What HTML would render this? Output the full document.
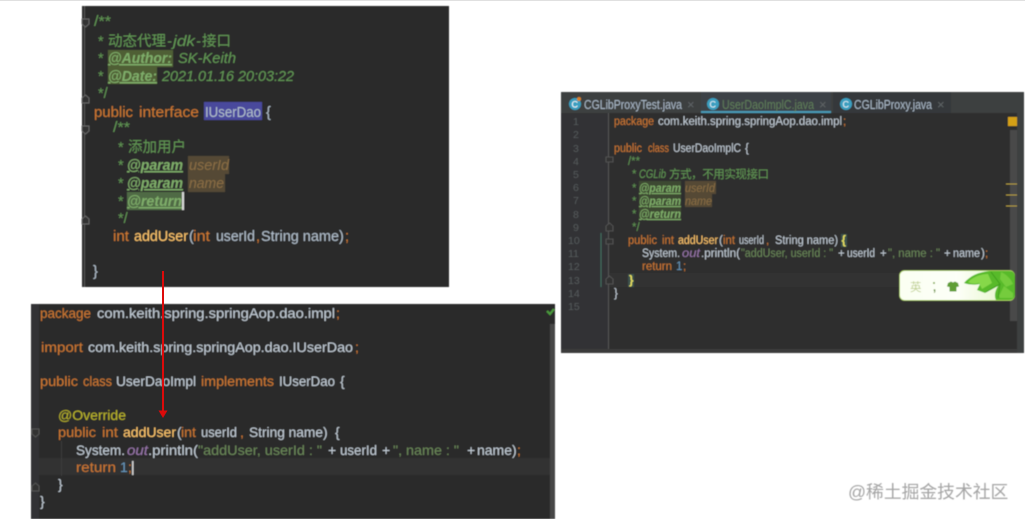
<!DOCTYPE html>
<html><head><meta charset="utf-8">
<style>
html,body{margin:0;padding:0;background:#fff;width:1025px;height:519px;overflow:hidden}
svg{display:block;position:absolute;left:0;top:0}
text{font-family:"Liberation Sans","Noto Sans CJK SC",sans-serif;white-space:pre}
.a text{font-size:14.5px}.b text{font-size:14px}.c text{font-size:11.5px}
.k{fill:#cc7832}.t{fill:#b0bdca}.w{fill:#c2ccd6}.m{fill:#ffc66d}.g{fill:#629755}.s{fill:#6a8759}.p{fill:#bbb529}
.tag{fill:#7fae6a;font-weight:bold;font-style:italic;text-decoration:underline}
.pn{fill:#8a6d45;font-style:italic}.i{font-style:italic}
.c text.ln{fill:#54585a;font-size:10.5px}
.c text.tab{font-size:12.5px}
.c text.x{font-size:13px;fill:#5f6466}
</style></head><body>
<svg width="1025" height="519" viewBox="0 0 1025 519" xmlns="http://www.w3.org/2000/svg">
<defs>
<filter id="bl" x="-5%" y="-5%" width="110%" height="110%"><feGaussianBlur stdDeviation="0.45"/></filter>
<linearGradient id="ime" x1="0" x2="1" y1="0" y2="0"><stop offset="0" stop-color="#fbfff2"/><stop offset=".5" stop-color="#fdfff8"/><stop offset="1" stop-color="#e2f4c4"/></linearGradient>
</defs>
<rect x="0" y="0" width="1025" height="1" fill="#e0e0e0"/>
<g filter="url(#bl)">
<!-- panel 1 -->
<rect x="82" y="6" width="367" height="281" fill="#2b2b2b"/>
<line x1="84.500" y1="6" x2="84.500" y2="287" stroke="#555" stroke-width="1"/>
<path d="M82 19h7v5l-3.500 3-3.500-3zM82 98l3.500-3 3.500 3v5h-7zM82 126h7v5l-3.500 3-3.500-3zM82 219l3.500-3 3.500 3v5h-7z" fill="#333" stroke="#666"/>
<rect x="108" y="50" width="65" height="17" fill="#4f5f35"/>
<rect x="108" y="67" width="49" height="17" fill="#4f5f35"/>
<rect x="204" y="102" width="58" height="18" fill="#4a4a9c"/>
<rect x="188" y="156" width="41" height="18" fill="#544a35"/>
<rect x="188" y="174" width="37" height="18" fill="#544a35"/>
<rect x="127" y="192" width="57" height="18" fill="#4f6a45"/>
<rect x="182" y="192" width="2" height="18" fill="#d8d8d8"/>
<g class="a">
<text x="94" y="26" class="g" textLength="17" lengthAdjust="spacingAndGlyphs">/**</text>
<text x="98" y="46" class="g">*</text><text x="108" y="46" class="g">动态代理</text><text x="167" y="46" class="g i">-</text><text x="173" y="46" class="g i" textLength="22" lengthAdjust="spacingAndGlyphs">jdk</text><text x="196" y="46" class="g i">-</text><text x="202" y="46" class="g">接口</text>
<text x="98" y="63" class="g">*</text><text x="108" y="63" class="tag" textLength="64" lengthAdjust="spacingAndGlyphs">@Author:</text><text x="178" y="63" class="g i" textLength="58" lengthAdjust="spacingAndGlyphs">SK-Keith</text>
<text x="98" y="81" class="g">*</text><text x="108" y="81" class="tag" textLength="49" lengthAdjust="spacingAndGlyphs">@Date:</text><text x="162" y="81" class="g i" textLength="132" lengthAdjust="spacingAndGlyphs">2021.01.16 20:03:22</text>
<text x="98" y="98" class="g">*/</text>
<text x="94" y="117" class="k" textLength="39" lengthAdjust="spacingAndGlyphs">public</text><text x="139" y="117" class="k" textLength="60" lengthAdjust="spacingAndGlyphs">interface</text><text x="205" y="117" class="t" textLength="56" lengthAdjust="spacingAndGlyphs">IUserDao</text><text x="266" y="117" class="t">{</text>
<text x="113" y="132" class="g" textLength="17" lengthAdjust="spacingAndGlyphs">/**</text>
<text x="118" y="152" class="g">*</text><text x="128" y="152" class="g">添加用户</text>
<text x="118" y="170" class="g">*</text><text x="127" y="170" class="tag" textLength="56" lengthAdjust="spacingAndGlyphs">@param</text><text x="189" y="170" class="pn" textLength="40" lengthAdjust="spacingAndGlyphs">userId</text>
<text x="118" y="188" class="g">*</text><text x="127" y="188" class="tag" textLength="56" lengthAdjust="spacingAndGlyphs">@param</text><text x="189" y="188" class="pn" textLength="35" lengthAdjust="spacingAndGlyphs">name</text>
<text x="118" y="206" class="g">*</text><text x="127" y="206" class="tag" textLength="55" lengthAdjust="spacingAndGlyphs">@return</text>
<text x="118" y="223" class="g">*/</text>
<text x="113" y="241" class="k" textLength="16" lengthAdjust="spacingAndGlyphs">int</text><text x="134" y="241" class="m" textLength="54" lengthAdjust="spacingAndGlyphs">addUser</text><text x="189" y="241" class="t">(</text><text x="193" y="241" class="k" textLength="17" lengthAdjust="spacingAndGlyphs">int</text><text x="216" y="241" class="t" textLength="39" lengthAdjust="spacingAndGlyphs">userId</text><text x="256" y="241" class="k">,</text><text x="261" y="241" class="t" textLength="78" lengthAdjust="spacingAndGlyphs">String name</text><text x="339" y="241" class="t">)</text><text x="345" y="241" class="k">;</text>
<text x="93" y="276" class="t">}</text>
</g>
<!-- panel 2 -->
<rect x="31" y="304" width="524" height="215" fill="#2b2b2b"/>
<rect x="31" y="304" width="8" height="215" fill="#303234"/>
<rect x="39" y="458" width="511" height="17" fill="#323232"/>
<rect x="550" y="324" width="5" height="195" fill="#474747"/>
<path d="M547 311l3 3 4-5" fill="none" stroke="#4c9a3c" stroke-width="2.200"/>
<path d="M32 429h7v5l-3.500 3-3.500-3zM32 486l3.500-3 3.500 3v5h-7z" fill="#333" stroke="#555"/>
<line x1="61.500" y1="441" x2="61.500" y2="476" stroke="#3c3c3c"/>
<g class="b">
<text x="40" y="318" class="k" textLength="51" lengthAdjust="spacingAndGlyphs">package</text><text x="97" y="318" class="w" textLength="238" lengthAdjust="spacingAndGlyphs">com.keith.spring.springAop.dao.impl</text><text x="336" y="318" class="k">;</text>
<text x="41" y="352" class="k" textLength="42" lengthAdjust="spacingAndGlyphs">import</text><text x="88" y="352" class="w" textLength="265" lengthAdjust="spacingAndGlyphs">com.keith.spring.springAop.dao.IUserDao</text><text x="355" y="352" class="k">;</text>
<text x="40" y="386" class="k" textLength="38" lengthAdjust="spacingAndGlyphs">public</text><text x="83" y="386" class="k" textLength="29" lengthAdjust="spacingAndGlyphs">class</text><text x="116" y="386" class="w" textLength="80" lengthAdjust="spacingAndGlyphs">UserDaoImpl</text><text x="201" y="386" class="k" textLength="73" lengthAdjust="spacingAndGlyphs">implements</text><text x="279" y="386" class="w" textLength="56" lengthAdjust="spacingAndGlyphs">IUserDao</text><text x="340" y="386" class="w">{</text>
<text x="58" y="420" class="p" textLength="68" lengthAdjust="spacingAndGlyphs">@Override</text>
<text x="58" y="437" class="k" textLength="38" lengthAdjust="spacingAndGlyphs">public</text><text x="102" y="437" class="k" textLength="16" lengthAdjust="spacingAndGlyphs">int</text><text x="123" y="437" class="m" textLength="53" lengthAdjust="spacingAndGlyphs">addUser</text><text x="177" y="437" class="w">(</text><text x="181" y="437" class="k" textLength="15" lengthAdjust="spacingAndGlyphs">int</text><text x="201" y="437" class="w" textLength="36" lengthAdjust="spacingAndGlyphs">userId</text><text x="240" y="437" class="k">,</text><text x="249" y="437" class="w" textLength="74" lengthAdjust="spacingAndGlyphs">String name</text><text x="323" y="437" class="w">)</text><text x="335" y="437" class="w">{</text>
<text x="76" y="455" class="w" textLength="49" lengthAdjust="spacingAndGlyphs">System.</text><text x="127" y="455" fill="#9876aa" class="i" textLength="21" lengthAdjust="spacingAndGlyphs">out</text><text x="148" y="455" class="w" textLength="50" lengthAdjust="spacingAndGlyphs">.println(</text><text x="198" y="455" class="s" textLength="124" lengthAdjust="spacingAndGlyphs">"addUser, userId : "</text><text x="328" y="455" class="w">+</text><text x="340" y="455" class="w" textLength="37" lengthAdjust="spacingAndGlyphs">userId</text><text x="382" y="455" class="w">+</text><text x="393" y="455" class="s" textLength="66" lengthAdjust="spacingAndGlyphs">", name : "</text><text x="467" y="455" class="w">+</text><text x="477" y="455" class="w" textLength="35" lengthAdjust="spacingAndGlyphs">name</text><text x="512" y="455" class="w">)</text><text x="517" y="455" class="k">;</text>
<text x="76" y="472" class="k" textLength="40" lengthAdjust="spacingAndGlyphs">return</text><text x="120" y="472" fill="#6897bb">1</text><text x="128" y="472" class="k">;</text>
<rect x="132" y="461" width="1.500" height="14" fill="#d0d0d0"/>
<text x="58" y="489" class="w">}</text>
<text x="40" y="506" class="w">}</text>
</g>
<!-- panel 3 -->
<rect x="561" y="92" width="463" height="261" fill="#2d2d2d"/>
<rect x="561" y="92" width="463" height="21" fill="#3c3f41"/>
<rect x="561" y="113" width="47" height="236" fill="#313335"/>
<line x1="608.500" y1="113" x2="608.500" y2="349" stroke="#555"/>
<rect x="561" y="349" width="463" height="4" fill="#3a3a3a"/>
<rect x="1017" y="92" width="7" height="261" fill="#3c3f41"/>
<rect x="610" y="273" width="400" height="14" fill="#323232"/>
<rect x="1010" y="130" width="7" height="191" fill="#4a4a4a"/>
<rect x="1008" y="117" width="9" height="9" fill="#d4a017"/>
<path d="M1006 184h11M1006 195h11M1006 206h11" stroke="#b09a40" stroke-width="1"/>
<rect x="833" y="92" width="118" height="21" fill="#35393b"/>
<rect x="701" y="92" width="130" height="19" fill="#3e4346"/>
<rect x="701" y="111" width="130" height="2" fill="#4a9ab5"/>
<line x1="601" y1="233" x2="601" y2="287" stroke="#3f6f5f" stroke-width="1"/>
<circle cx="575" cy="104" r="6" fill="#3a9fc0"/><circle cx="579" cy="99" r="2" fill="#d8802a"/><text x="571.500" y="107.500" fill="#fff" style="font-size:9px">C</text>
<circle cx="713" cy="104" r="6" fill="#3a9fc0"/><text x="709.500" y="107.500" fill="#e8f4f8" style="font-size:9px">C</text>
<circle cx="846" cy="104" r="6" fill="#3a9fc0"/><text x="842.500" y="107.500" fill="#e8f4f8" style="font-size:9px">C</text>
<g class="c">
<text x="584" y="109" fill="#a9b7c6" class="tab" textLength="98" lengthAdjust="spacingAndGlyphs">CGLibProxyTest.java</text><text x="687" y="109" class="x">×</text>
<text x="722" y="109" fill="#5f7d5a" class="tab" textLength="92" lengthAdjust="spacingAndGlyphs">UserDaoImplC.java</text><text x="819" y="109" class="x">×</text>
<text x="854" y="109" fill="#a9b7c6" class="tab" textLength="78" lengthAdjust="spacingAndGlyphs">CGLibProxy.java</text><text x="937" y="109" class="x">×</text>
<text class="ln" x="573" y="125">1</text><text class="ln" x="573" y="138">2</text><text class="ln" x="573" y="152">3</text><text class="ln" x="573" y="165">4</text><text class="ln" x="573" y="178">5</text><text class="ln" x="573" y="191">6</text><text class="ln" x="573" y="204">7</text><text class="ln" x="573" y="218">8</text><text class="ln" x="573" y="231">9</text><text class="ln" x="568" y="244">10</text><text class="ln" x="568" y="257">11</text><text class="ln" x="568" y="270">12</text><text class="ln" x="568" y="284">13</text><text class="ln" x="568" y="297">14</text><text class="ln" x="568" y="310">15</text>
<rect x="685" y="181" width="31" height="13" fill="#544a35"/>
<rect x="685" y="194" width="27" height="13" fill="#544a35"/>
<rect x="639" y="181" width="42" height="13" fill="#3c4a30"/>
<rect x="639" y="194" width="42" height="13" fill="#3c4a30"/>
<rect x="639" y="207" width="42" height="13" fill="#3c4a30"/>
<text x="614" y="125" class="k" textLength="40" lengthAdjust="spacingAndGlyphs">package</text><text x="658" y="125" class="w" textLength="184" lengthAdjust="spacingAndGlyphs">com.keith.spring.springAop.dao.impl</text><text x="843" y="125" class="k">;</text>
<text x="614" y="152" class="k" textLength="28" lengthAdjust="spacingAndGlyphs">public</text><text x="648" y="152" class="k" textLength="21" lengthAdjust="spacingAndGlyphs">class</text><text x="673" y="152" class="w" textLength="68" lengthAdjust="spacingAndGlyphs">UserDaoImplC</text><text x="745" y="152" class="w">{</text>
<text x="628" y="165" class="g" textLength="12" lengthAdjust="spacingAndGlyphs">/**</text>
<text x="632" y="178" class="g">*</text><text x="639" y="178" class="g i" textLength="27" lengthAdjust="spacingAndGlyphs">CGLib</text><text x="669" y="178" class="g" textLength="100">方式，不用实现接口</text>
<text x="632" y="192" class="g">*</text><text x="639" y="192" class="tag" textLength="42" lengthAdjust="spacingAndGlyphs">@param</text><text x="685" y="192" class="pn" textLength="30" lengthAdjust="spacingAndGlyphs">userId</text>
<text x="632" y="205" class="g">*</text><text x="639" y="205" class="tag" textLength="42" lengthAdjust="spacingAndGlyphs">@param</text><text x="685" y="205" class="pn" textLength="27" lengthAdjust="spacingAndGlyphs">name</text>
<text x="632" y="218" class="g">*</text><text x="639" y="218" class="tag" textLength="42" lengthAdjust="spacingAndGlyphs">@return</text>
<text x="632" y="231" class="g">*/</text>
<text x="628" y="244" class="k" textLength="29" lengthAdjust="spacingAndGlyphs">public</text><text x="662" y="244" class="k" textLength="12" lengthAdjust="spacingAndGlyphs">int</text><text x="678" y="244" class="m" textLength="40" lengthAdjust="spacingAndGlyphs">addUser</text><text x="719" y="244" class="w">(</text><text x="723" y="244" class="k" textLength="12" lengthAdjust="spacingAndGlyphs">int</text><text x="739" y="244" class="w" textLength="25" lengthAdjust="spacingAndGlyphs">userId</text><text x="766" y="244" class="k">,</text><text x="775" y="244" class="w" textLength="63" lengthAdjust="spacingAndGlyphs">String name)</text><rect x="841" y="234" width="6" height="13" fill="#3b514d"/><text x="841.500" y="244" fill="#e8e060" style="font-weight:bold">{</text>
<text x="642" y="257" class="w" textLength="38" lengthAdjust="spacingAndGlyphs">System.</text><text x="682" y="257" fill="#9876aa" class="i" textLength="18" lengthAdjust="spacingAndGlyphs">out</text><text x="701" y="257" class="w" textLength="39" lengthAdjust="spacingAndGlyphs">.println(</text><text x="741" y="257" class="s" textLength="92" lengthAdjust="spacingAndGlyphs">"addUser, userId : "</text><text x="838" y="257" class="w">+</text><text x="847" y="257" class="w" textLength="28" lengthAdjust="spacingAndGlyphs">userId</text><text x="880" y="257" class="w">+</text><text x="888" y="257" class="s" textLength="52" lengthAdjust="spacingAndGlyphs">", name : "</text><text x="944" y="257" class="w">+</text><text x="953" y="257" class="w" textLength="27" lengthAdjust="spacingAndGlyphs">name</text><text x="981" y="257" class="w">)</text><text x="985" y="257" class="k">;</text>
<text x="642" y="270" class="k" textLength="30" lengthAdjust="spacingAndGlyphs">return</text><text x="676" y="270" fill="#6897bb">1</text><text x="683" y="270" class="k">;</text>
<rect x="628" y="274" width="6" height="13" fill="#3b514d"/><text x="629" y="284" fill="#e8e060" style="font-weight:bold">}</text>
<text x="614" y="297" class="w">}</text>
</g>
<path d="M606 157h7v5h-7zM606 226l3.500-3 3.500 3v5h-7zM606 239h7v5h-7zM606 279l3.500-3 3.500 3v5h-7z" fill="#333" stroke="#5a5a5a" stroke-width=".8"/>
</g>
<!-- ime widget -->
<g filter="url(#bl)">
<rect x="899.500" y="270.500" width="115" height="30" rx="5" fill="url(#ime)" stroke="#a8d060"/>
<path d="M964 283C970 276 978 272 990 271H1009Q1015 271 1015 277V294Q1015 300 1009 300H996C994 296 995 291 998 286L985 293L977 290L980 284C975 285 969 285 964 283Z" fill="#58ba2a"/>
<path d="M968 282C974 276 982 274 988 274L992 283L982 289L979 283C975 284 971 284 968 282Z" fill="#86d84a"/>
<path d="M1001 272C1006 274 1011 279 1013 284L1006 287L1000 279ZM999 296L1004 286L1013 293V298H1000Z" fill="#74cc3c"/>
<path d="M991 272L1000 284L986 292M1000 284L998 298" fill="none" stroke="#3a9a1e" stroke-width=".8"/>
<text x="910" y="291" fill="#bfd092" style="font-size:11.500px">英</text>
<circle cx="934" cy="283" r="1" fill="#7fa84a"/>
<text x="933" y="291" fill="#5f8a30" style="font-size:11px;font-weight:bold">,</text>
<path d="M948 283l3-1.500 2 1 2-1 3 1.500 1 3.500-2.500.5v4.500h-7v-4.500l-2.500-.5z" fill="#5f9e35"/>
</g>
<!-- arrow -->
<path d="M163 271V411" stroke="#dd0a0a" stroke-width="2" fill="none"/>
<path d="M158.500 410.500h9l-4.500 7.500z" fill="#dd0a0a"/>
<text x="848" y="498" fill="#a4a4a4" style="font-size:17.800px" filter="url(#bl)">@稀土掘金技术社区</text>
</svg>
</body></html>
